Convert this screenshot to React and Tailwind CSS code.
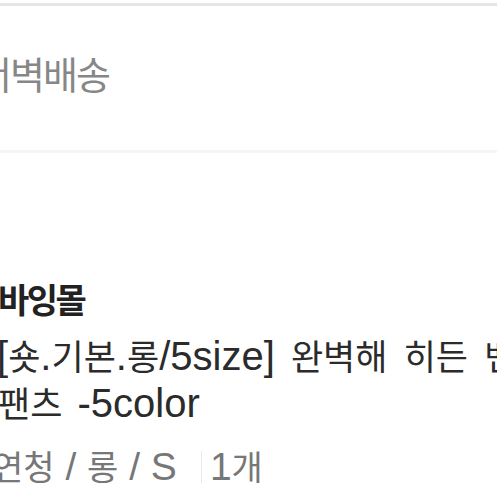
function H({ children, size = "text-[35px]" }) {
  return <span className={`${size} leading-none`}>{children}</span>;
}

function H4({ children }) {
  return <span className="text-[34px] leading-none">{children}</span>;
}

export default function App() {
  const kr = { fontFamily: '"Noto Sans CJK KR", "Noto Sans", sans-serif' };
  const mix = { fontFamily: '"Liberation Sans", "Noto Sans CJK KR", sans-serif' };
  return (
    <div className="w-[497px] h-[497px] overflow-hidden bg-white">
      <div className="h-[3px]" />
      <div className="h-[3px] bg-[#e6e6e6]" />
      <div className="h-[144px] pt-[45px] -ml-[23px] whitespace-nowrap" style={kr}>
        <div className="h-[44px] text-[38px] leading-[44px] tracking-[-2px] text-[#878787]">서벽배송</div>
      </div>
      <div className="h-[3px] bg-[#f5f5f5]" />
      <div className="pt-[124px] whitespace-nowrap">
        <div className="-ml-[2px] h-[44px] text-[34px] leading-[44px] font-bold tracking-[-2.5px] text-[#222]" style={kr}>
          바잉몰
        </div>
        <div className="mt-[12px] -ml-[3px] h-[47px] text-[40px] leading-[47px] [word-spacing:5px] text-[#2b2b2b]" style={mix}>
          [<H>숏</H>.<H>기본</H>.<H>롱</H>/5size] <H>완벽해</H> <H>히든</H> <H>밴딩</H>
        </div>
        <div className="-ml-[2px] h-[47px] text-[40px] leading-[47px] [word-spacing:4px] text-[#2b2b2b]" style={mix}>
          <H>팬츠</H> -5color
        </div>
        <div className="mt-[18px] -ml-[8px] h-[44px] flex items-center text-[39px] leading-[44px] text-[#777]" style={mix}>
          <span>
            <H4>연청</H4> / <H4>롱</H4> / S
          </span>
          <span className="ml-[24px] mr-[8px] w-px h-[32px] bg-[#e8e8e8]" />
          <span>
            1<H4>개</H4>
          </span>
        </div>
      </div>
    </div>
  );
}
